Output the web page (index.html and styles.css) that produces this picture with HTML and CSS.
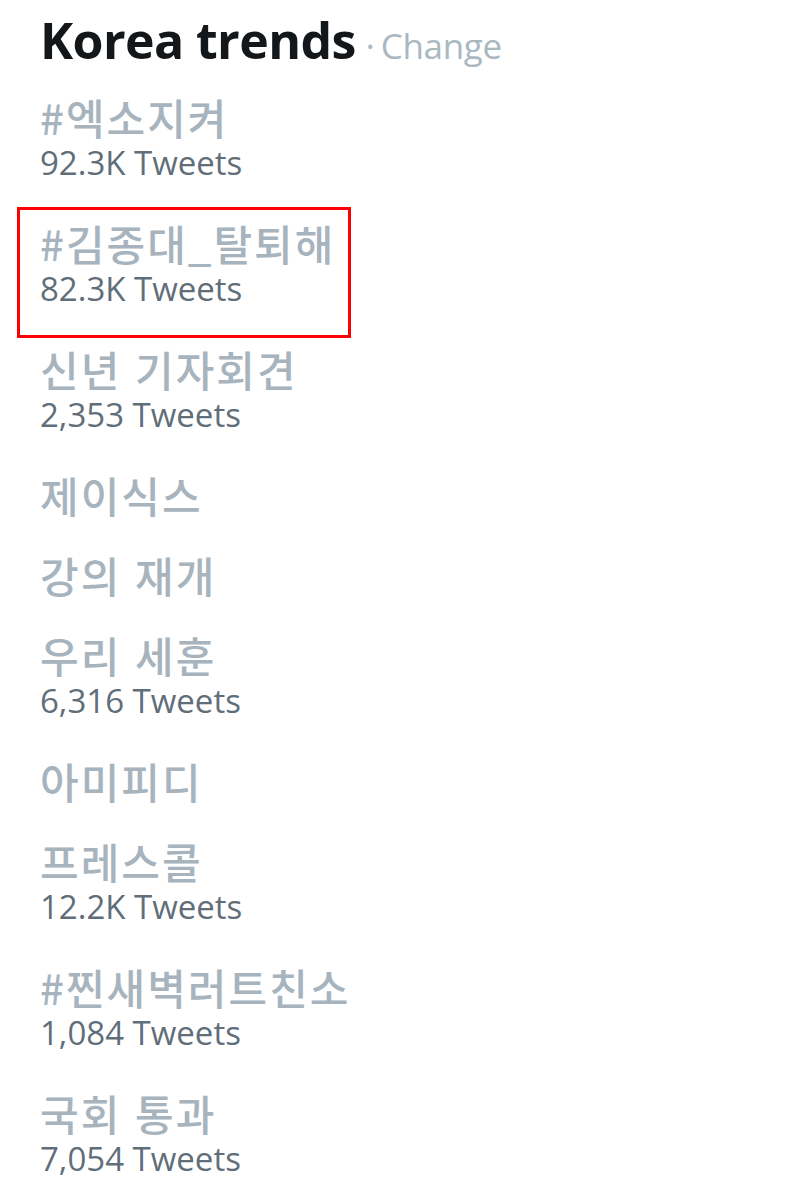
FILE: index.html
```html
<!DOCTYPE html>
<html lang="ko">
<head>
<meta charset="utf-8">
<title>Korea trends</title>
<link rel="stylesheet" href="styles.css">
</head>
<body>
<div class="trends">
  <div class="header">
    <h3 class="title">Korea trends</h3>
    <span class="dot">·</span>
    <a class="change">Change</a>
  </div>
  <ul class="list">
    <li class="item"><span class="name">#엑소지켜</span><span class="count">92.3K Tweets</span></li>
    <li class="item highlighted"><span class="name">#김종대_탈퇴해</span><span class="count">82.3K Tweets</span></li>
    <li class="item"><span class="name">신년 기자회견</span><span class="count">2,353 Tweets</span></li>
    <li class="item"><span class="name">제이식스</span></li>
    <li class="item"><span class="name">강의 재개</span></li>
    <li class="item"><span class="name">우리 세훈</span><span class="count">6,316 Tweets</span></li>
    <li class="item"><span class="name">아미피디</span></li>
    <li class="item"><span class="name">프레스콜</span><span class="count">12.2K Tweets</span></li>
    <li class="item"><span class="name">#찐새벽러트친소</span><span class="count">1,084 Tweets</span></li>
    <li class="item"><span class="name">국회 통과</span><span class="count">7,054 Tweets</span></li>
  </ul>
</div>
</body>
</html>
```

FILE: styles.css
```css
html, body {
  margin: 0;
  padding: 0;
  background: #ffffff;
}

body {
  font-family: "Open Sans", "Noto Sans CJK KR", sans-serif;
}

.trends {
  padding: 0 0 0 40px;
}

.header {
  display: flex;
  align-items: baseline;
  height: 77px;
}

.title {
  margin: 0;
  font-size: 50px;
  font-weight: 700;
  color: #14171a;
  line-height: 80px;
  letter-spacing: -0.6px;
}

.dot {
  font-size: 34px;
  color: #aab8c2;
  margin: 0 6px 0 10px;
}

.change {
  font-size: 35px;
  color: #aab8c2;
  letter-spacing: -0.3px;
}

.list {
  list-style: none;
  margin: 0;
  padding: 0;
}

.item {
  position: relative;
  display: flex;
  flex-direction: column;
  padding: 17px 0;
}

.name {
  font-family: "Noto Sans CJK KR", "Open Sans", sans-serif;
  font-size: 42px;
  font-weight: 500;
  line-height: 46px;
  letter-spacing: 2px;
  color: #a7b4be;
}

.count {
  font-size: 33px;
  line-height: 46px;
  color: #5f6e79;
}

.highlighted::after {
  content: "";
  position: absolute;
  left: -23px;
  top: 4px;
  width: 328px;
  height: 125px;
  border: 3px solid #ff0000;
}
```
